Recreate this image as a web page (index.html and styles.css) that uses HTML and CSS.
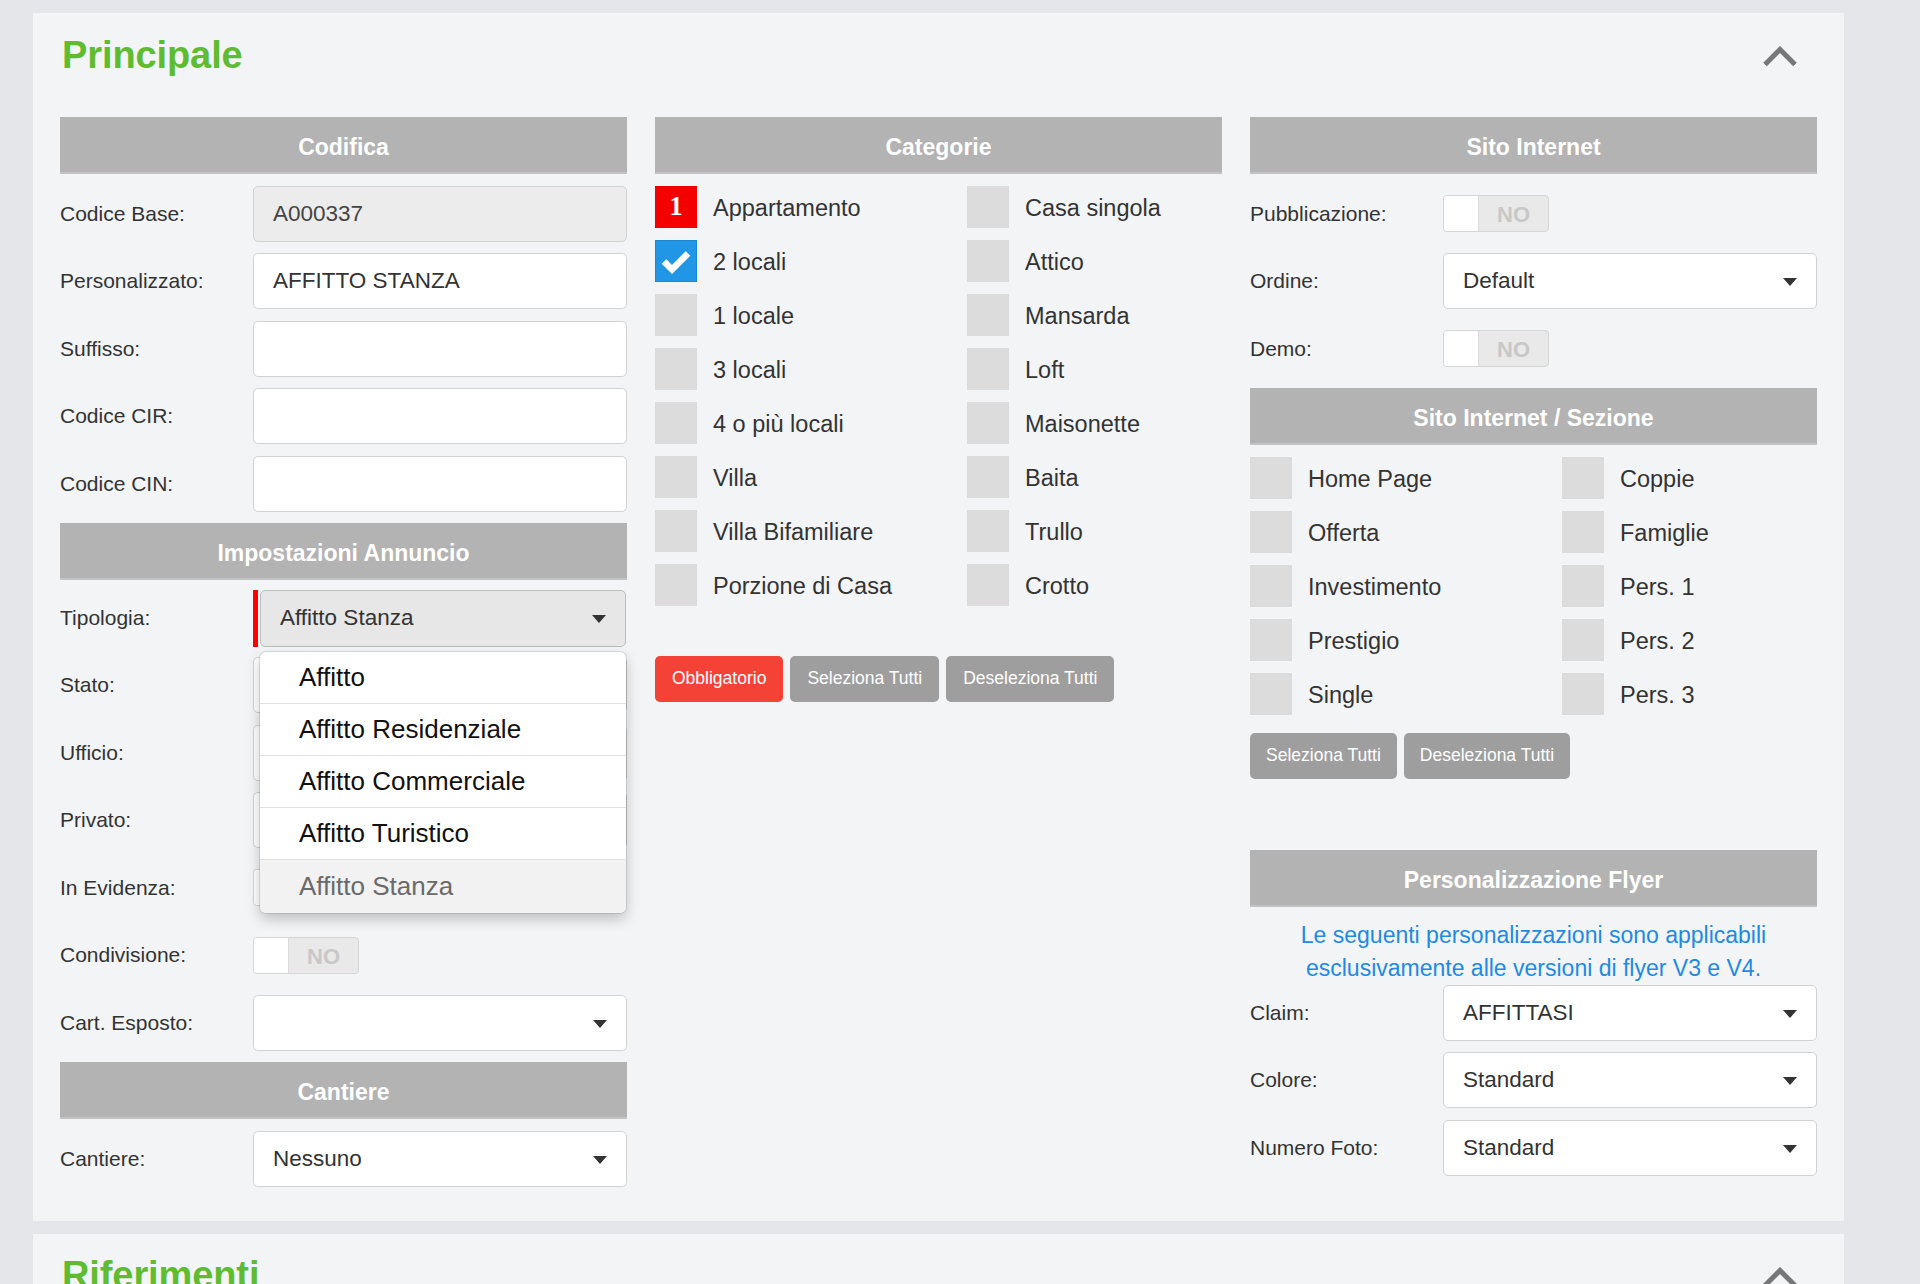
FILE: index.html
```html
<!DOCTYPE html>
<html lang="it">
<head>
<meta charset="utf-8">
<title>Principale</title>
<link rel="stylesheet" href="styles.css">
</head>
<body>
<div class="page">
  <section class="panel">
    <div class="panel-head">
      <h2 class="panel-title">Principale</h2>
      <svg class="chev" viewBox="0 0 36 21" width="36" height="21"><polyline points="3,18.5 18,3.5 33,18.5" fill="none" stroke="#777" stroke-width="5"/></svg>
    </div>
    <div class="cols">
      <!-- Colonna 1 -->
      <div class="col">
        <div class="sec-h">Codifica</div>
        <div class="frow"><label>Codice Base:</label><div class="inp ro">A000337</div></div>
        <div class="frow"><label>Personalizzato:</label><div class="inp">AFFITTO STANZA</div></div>
        <div class="frow"><label>Suffisso:</label><div class="inp"></div></div>
        <div class="frow"><label>Codice CIR:</label><div class="inp"></div></div>
        <div class="frow"><label>Codice CIN:</label><div class="inp"></div></div>
        <div class="sec-h">Impostazioni Annuncio</div>
        <div class="frow frow-tip"><label>Tipologia:</label>
          <div class="req">
            <span class="req-bar"></span>
            <div class="inp sel open">Affitto Stanza<span class="caret"></span></div>
            <ul class="menu">
              <li>Affitto</li>
              <li>Affitto Residenziale</li>
              <li>Affitto Commerciale</li>
              <li>Affitto Turistico</li>
              <li class="cur">Affitto Stanza</li>
            </ul>
          </div>
        </div>
        <div class="frow"><label>Stato:</label><div class="inp sel"><span class="caret"></span></div></div>
        <div class="frow"><label>Ufficio:</label><div class="inp sel"><span class="caret"></span></div></div>
        <div class="frow"><label>Privato:</label><div class="inp"></div></div>
        <div class="frow"><label>In Evidenza:</label><div class="toggle"><span class="knob"></span><span class="no"></span></div></div>
        <div class="frow"><label>Condivisione:</label><div class="toggle"><span class="knob"></span><span class="no">NO</span></div></div>
        <div class="frow"><label>Cart. Esposto:</label><div class="inp sel"><span class="caret"></span></div></div>
        <div class="sec-h">Cantiere</div>
        <div class="frow"><label>Cantiere:</label><div class="inp sel">Nessuno<span class="caret"></span></div></div>
      </div>

      <!-- Colonna 2 -->
      <div class="col">
        <div class="sec-h">Categorie</div>
        <div class="cbgrid">
          <div class="cb"><span class="box num">1</span><span>Appartamento</span></div>
          <div class="cb"><span class="box"></span><span>Casa singola</span></div>
          <div class="cb"><span class="box chk"><svg viewBox="0 0 42 42" width="42" height="42"><path d="M9 21.5 L17 29.5 L33 13.5" fill="none" stroke="#fff" stroke-width="6.5"/></svg></span><span>2 locali</span></div>
          <div class="cb"><span class="box"></span><span>Attico</span></div>
          <div class="cb"><span class="box"></span><span>1 locale</span></div>
          <div class="cb"><span class="box"></span><span>Mansarda</span></div>
          <div class="cb"><span class="box"></span><span>3 locali</span></div>
          <div class="cb"><span class="box"></span><span>Loft</span></div>
          <div class="cb"><span class="box"></span><span>4 o più locali</span></div>
          <div class="cb"><span class="box"></span><span>Maisonette</span></div>
          <div class="cb"><span class="box"></span><span>Villa</span></div>
          <div class="cb"><span class="box"></span><span>Baita</span></div>
          <div class="cb"><span class="box"></span><span>Villa Bifamiliare</span></div>
          <div class="cb"><span class="box"></span><span>Trullo</span></div>
          <div class="cb"><span class="box"></span><span>Porzione di Casa</span></div>
          <div class="cb"><span class="box"></span><span>Crotto</span></div>
        </div>
        <div class="btns btns-cat">
          <span class="btn red">Obbligatorio</span>
          <span class="btn">Seleziona Tutti</span>
          <span class="btn">Deseleziona Tutti</span>
        </div>
      </div>

      <!-- Colonna 3 -->
      <div class="col">
        <div class="sec-h">Sito Internet</div>
        <div class="frow"><label>Pubblicazione:</label><div class="toggle"><span class="knob"></span><span class="no">NO</span></div></div>
        <div class="frow"><label>Ordine:</label><div class="inp sel">Default<span class="caret"></span></div></div>
        <div class="frow"><label>Demo:</label><div class="toggle"><span class="knob"></span><span class="no">NO</span></div></div>
        <div class="sec-h">Sito Internet / Sezione</div>
        <div class="cbgrid">
          <div class="cb"><span class="box"></span><span>Home Page</span></div>
          <div class="cb"><span class="box"></span><span>Coppie</span></div>
          <div class="cb"><span class="box"></span><span>Offerta</span></div>
          <div class="cb"><span class="box"></span><span>Famiglie</span></div>
          <div class="cb"><span class="box"></span><span>Investimento</span></div>
          <div class="cb"><span class="box"></span><span>Pers. 1</span></div>
          <div class="cb"><span class="box"></span><span>Prestigio</span></div>
          <div class="cb"><span class="box"></span><span>Pers. 2</span></div>
          <div class="cb"><span class="box"></span><span>Single</span></div>
          <div class="cb"><span class="box"></span><span>Pers. 3</span></div>
        </div>
        <div class="btns btns-sez">
          <span class="btn">Seleziona Tutti</span>
          <span class="btn">Deseleziona Tutti</span>
        </div>
        <div class="sec-h flyer-h">Personalizzazione Flyer</div>
        <p class="note">Le seguenti personalizzazioni sono applicabili<br>esclusivamente alle versioni di flyer V3 e V4.</p>
        <div class="frow"><label>Claim:</label><div class="inp sel">AFFITTASI<span class="caret"></span></div></div>
        <div class="frow"><label>Colore:</label><div class="inp sel">Standard<span class="caret"></span></div></div>
        <div class="frow"><label>Numero Foto:</label><div class="inp sel">Standard<span class="caret"></span></div></div>
      </div>
    </div>
  </section>

  <section class="panel">
    <div class="panel-head">
      <h2 class="panel-title">Riferimenti</h2>
      <svg class="chev" viewBox="0 0 36 21" width="36" height="21"><polyline points="3,18.5 18,3.5 33,18.5" fill="none" stroke="#777" stroke-width="5"/></svg>
    </div>
    <div class="spacer"></div>
  </section>
</div>
</body>
</html>
```

FILE: styles.css
```css
* { box-sizing: border-box; }

html, body { height: 1284px; overflow: hidden; }

body {
  margin: 0;
  background: #e4e6ea;
  font-family: "Liberation Sans", Arial, Helvetica, sans-serif;
  color: #333;
}

.page {
  padding: 13px 0 0 33px;
}

.panel {
  width: 1811px;
  background: #f2f4f6;
  padding: 0 27px 34px;
}

.panel + .panel {
  margin-top: 13px;
}

.panel-head {
  height: 84px;
  display: flex;
  align-items: center;
  justify-content: space-between;
  padding: 0 19px 0 2px;
  margin-bottom: 20px;
}

.panel-title {
  margin: 0;
  font-size: 38px;
  font-weight: bold;
  color: #5fbc31;
  letter-spacing: -0.1px;
}

.chev { display: block; margin-top: 3px; }

.spacer { height: 200px; }

.cols {
  display: grid;
  grid-template-columns: repeat(3, 1fr);
  column-gap: 28px;
  align-items: start;
}

.col {
  display: flex;
  flex-direction: column;
  gap: 11.5px;
}

.sec-h {
  height: 57px;
  background: #b3b3b3;
  color: #fff;
  font-weight: bold;
  font-size: 23px;
  display: flex;
  align-items: center;
  justify-content: center;
  padding-top: 4px;
  box-shadow: inset 0 -2px 0 #c3c3c3;
}

.frow {
  display: grid;
  grid-template-columns: 193px 1fr;
  align-items: center;
  height: 56px;
}

.frow-tip { margin-top: -2px; }

.frow > label {
  font-size: 21px;
  color: #333;
}

.inp {
  height: 56px;
  border: 1px solid #d2d2d2;
  border-radius: 5px;
  background: #fff;
  padding: 0 19px;
  display: flex;
  align-items: center;
  font-size: 22.5px;
  color: #333;
  position: relative;
}

.inp.ro {
  background: #ececec;
  color: #444;
}

.sel .caret {
  position: absolute;
  right: 19px;
  top: 50%;
  margin-top: -3px;
  border-left: 7px solid transparent;
  border-right: 7px solid transparent;
  border-top: 8px solid #333;
}

.sel.open {
  background: #e7e7e7;
  border-color: #bdbdbd;
}

.req {
  position: relative;
  display: flex;
  gap: 2px;
  height: 56px;
}

.req-bar {
  width: 5px;
  background: #f00;
  flex: none;
  height: 57px;
}

.req .inp {
  flex: 1;
  height: 57px;
  margin-right: 1px;
}

.menu {
  position: absolute;
  top: 62px;
  left: 7px;
  right: 1px;
  margin: 0;
  padding: 0;
  list-style: none;
  background: #fff;
  border-radius: 6px;
  box-shadow: 0 6px 14px rgba(0, 0, 0, 0.22), 0 0 0 1px rgba(0, 0, 0, 0.1);
  overflow: hidden;
  z-index: 5;
}

.menu li {
  height: 52px;
  display: flex;
  align-items: center;
  padding-left: 39px;
  font-size: 26px;
  color: #111;
  border-bottom: 1px solid #e2e2e2;
}

.menu li.cur {
  height: 53px;
  background: #f2f2f2;
  color: #6a6a6a;
  border-bottom: 0;
}

.toggle {
  justify-self: start;
  width: 106px;
  height: 37px;
  border: 1px solid #d6d6d6;
  border-radius: 4px;
  background: #e9e9e9;
  display: flex;
  overflow: hidden;
}

.knob {
  width: 35px;
  background: #fff;
  border-right: 1px solid #dcdcdc;
}

.no {
  flex: 1;
  text-align: center;
  font-weight: bold;
  font-size: 22px;
  line-height: 37px;
  color: #c8c8c8;
}

.cbgrid {
  display: grid;
  grid-template-columns: 312px 1fr;
  row-gap: 12px;
}

.cb {
  display: flex;
  align-items: center;
  gap: 16px;
  height: 42px;
  font-size: 23.5px;
  color: #333;
}

.cb > span:last-child {
  padding-top: 4px;
}

.box {
  width: 42px;
  height: 42px;
  background: #dcdcdc;
  flex: none;
  display: flex;
  align-items: center;
  justify-content: center;
}

.box.num {
  background: #f40000;
  color: #fff;
  font-family: "Liberation Serif", "Times New Roman", serif;
  font-weight: bold;
  font-size: 27px;
}

.box.chk {
  background: #2196e6;
  box-shadow: inset 0 0 0 1px #1b88d4;
}

.box svg { display: block; }

.btns {
  display: flex;
  gap: 7px;
}

.btns-cat { margin-top: 38.5px; }
.btns-sez { margin-top: 6.5px; }
.btns-sez .btn { padding: 0 16px; }

.btn {
  height: 46px;
  padding: 0 17px;
  border-radius: 5px;
  background: #9e9e9e;
  color: #fff;
  font-size: 17.5px;
  display: flex;
  align-items: center;
}

.btn.red { background: #f44336; }

.flyer-h { margin-top: 60px; }

.note {
  margin: 0 0 -11.5px;
  color: #1f8ae4;
  font-size: 23px;
  line-height: 33px;
  text-align: center;
}
```
